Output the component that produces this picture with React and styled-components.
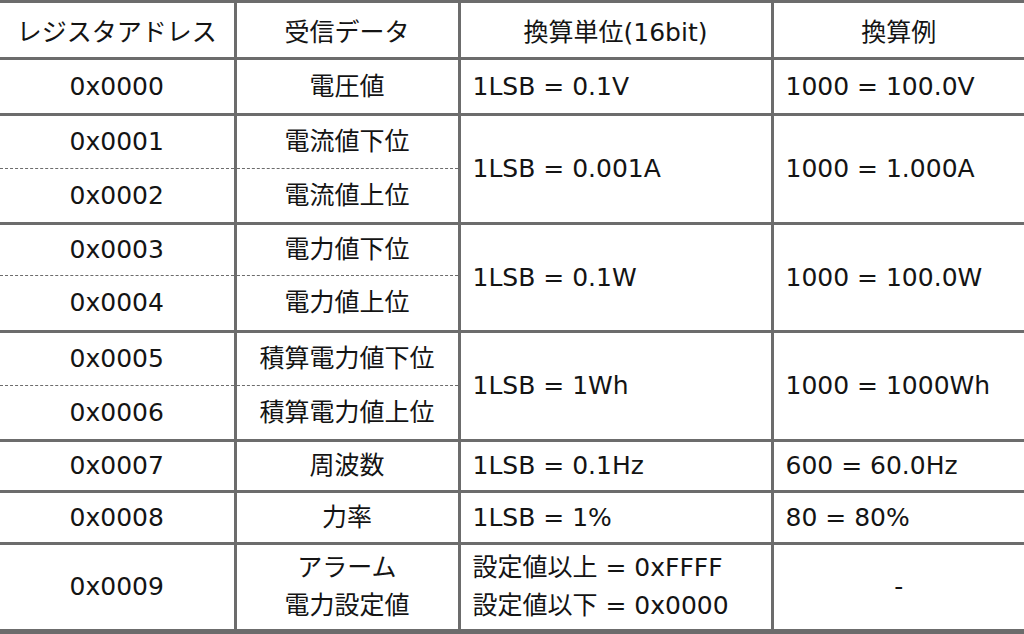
import styled, { createGlobalStyle } from 'styled-components';

const GlobalStyle = createGlobalStyle`
  html, body {
    margin: 0;
    padding: 0;
    background: #ffffff;
  }
  body {
    font-family: 'DejaVu Sans', 'Noto Sans CJK JP', sans-serif;
    color: #141414;
  }
`;

const LINE = '#6c6c6c';

const Table = styled.table`
  width: 1024px;
  table-layout: fixed;
  border-collapse: collapse;
  border-top: 3px solid ${LINE};
  border-bottom: 5px solid ${LINE};
  font-size: 25px;
`;

const Row = styled.tr`
  height: ${({ h }) => h}px;
`;

const Head = styled.th`
  font-weight: 400;
  text-align: center;
  padding: 0;
  border: 3px solid ${LINE};
  &:first-child { border-left: none; }
  &:last-child { border-right: none; }
`;

const Cell = styled.td`
  padding: 0 ${({ align }) => (align === 'left' ? '12px' : '0')};
  text-align: ${({ align }) => align || 'center'};
  line-height: 38px;
  border-left: 3px solid ${LINE};
  border-right: 3px solid ${LINE};
  border-top: ${({ top }) => (top === 'dash' ? `1px dashed ${LINE}` : `3px solid ${LINE}`)};
  border-bottom: ${({ bottom }) => (bottom === 'dash' ? `1px dashed ${LINE}` : `3px solid ${LINE}`)};
  &:first-child { border-left: none; }
  &:last-child { border-right: none; }
`;

const singles = [
  { addr: '0x0000', data: '電圧値', unit: '1LSB = 0.1V', ex: '1000 = 100.0V', h: 56 },
];

const pairs = [
  { a: ['0x0001', '電流値下位'], b: ['0x0002', '電流値上位'], unit: '1LSB = 0.001A', ex: '1000 = 1.000A', h: [54, 55] },
  { a: ['0x0003', '電力値下位'], b: ['0x0004', '電力値上位'], unit: '1LSB = 0.1W', ex: '1000 = 100.0W', h: [52, 56] },
  { a: ['0x0005', '積算電力値下位'], b: ['0x0006', '積算電力値上位'], unit: '1LSB = 1Wh', ex: '1000 = 1000Wh', h: [54, 55] },
];

const tail = [
  { addr: '0x0007', data: '周波数', unit: '1LSB = 0.1Hz', ex: '600 = 60.0Hz', h: 51 },
  { addr: '0x0008', data: '力率', unit: '1LSB = 1%', ex: '80 = 80%', h: 52 },
];

const App = () => {
  return (
    <>
      <GlobalStyle />
      <Table>
        <colgroup>
          <col style={{ width: 235 }} />
          <col style={{ width: 224 }} />
          <col style={{ width: 313 }} />
          <col />
        </colgroup>
        <thead>
          <Row h={57}>
            <Head>レジスタアドレス</Head>
            <Head>受信データ</Head>
            <Head>換算単位(16bit)</Head>
            <Head>換算例</Head>
          </Row>
        </thead>
        <tbody>
          {singles.map((r) => (
            <Row key={r.addr} h={r.h}>
              <Cell>{r.addr}</Cell>
              <Cell>{r.data}</Cell>
              <Cell align="left">{r.unit}</Cell>
              <Cell align="left">{r.ex}</Cell>
            </Row>
          ))}
          {pairs.map((p) => [
            <Row key={p.a[0]} h={p.h[0]}>
              <Cell bottom="dash">{p.a[0]}</Cell>
              <Cell bottom="dash">{p.a[1]}</Cell>
              <Cell align="left" rowSpan={2}>{p.unit}</Cell>
              <Cell align="left" rowSpan={2}>{p.ex}</Cell>
            </Row>,
            <Row key={p.b[0]} h={p.h[1]}>
              <Cell top="dash">{p.b[0]}</Cell>
              <Cell top="dash">{p.b[1]}</Cell>
            </Row>,
          ])}
          {tail.map((r) => (
            <Row key={r.addr} h={r.h}>
              <Cell>{r.addr}</Cell>
              <Cell>{r.data}</Cell>
              <Cell align="left">{r.unit}</Cell>
              <Cell align="left">{r.ex}</Cell>
            </Row>
          ))}
          <Row h={88}>
            <Cell>0x0009</Cell>
            <Cell>アラーム<br />電力設定値</Cell>
            <Cell align="left">設定値以上 = 0xFFFF<br />設定値以下 = 0x0000</Cell>
            <Cell>-</Cell>
          </Row>
        </tbody>
      </Table>
    </>
  );
};

export default App;
